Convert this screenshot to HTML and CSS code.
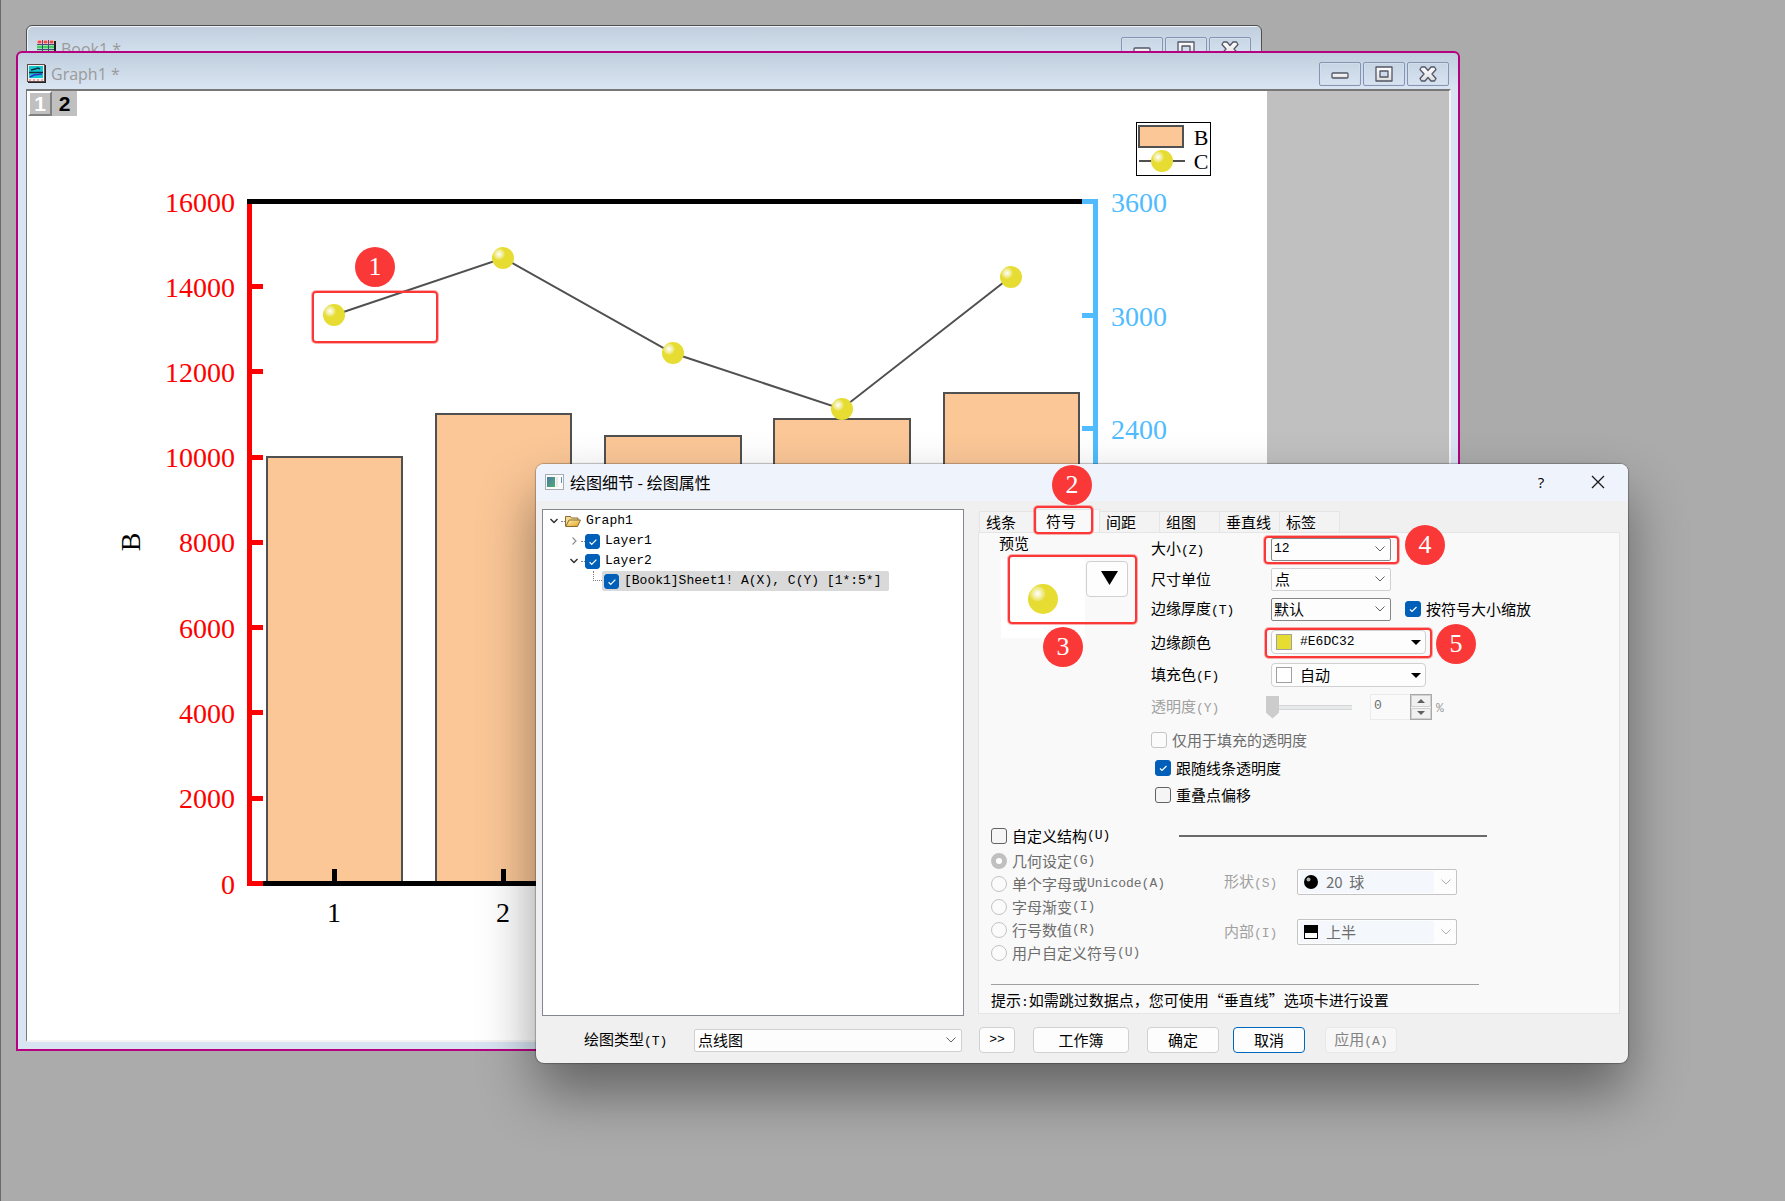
FILE: index.html
```
<!DOCTYPE html>
<html lang="zh-CN">
<head>
    <meta charset="UTF-8">
    <meta name="viewport" content="width=device-width, initial-scale=1.0">
    <title>绘图细节 - 绘图属性</title>
    <link rel="stylesheet" href="styles.css">
</head>
<body>
    <!-- Shared shapes -->
    <svg class="defs" width="0" height="0" aria-hidden="true">
        <defs>
            <radialGradient id="ball-fill" cx="0.32" cy="0.32" r="0.27">
                <stop offset="0" stop-color="#ffffff"/>
                <stop offset="0.4" stop-color="#f6f3bd"/>
                <stop offset="0.9" stop-color="#ebe35c"/>
                <stop offset="1" stop-color="#e6dc32"/>
            </radialGradient>
            <linearGradient id="glyph-fill" x1="0" y1="0" x2="0" y2="1">
                <stop offset="0" stop-color="#ffffff"/>
                <stop offset="1" stop-color="#dcdcdc"/>
            </linearGradient>
            <linearGradient id="folder-fill" x1="0" y1="0" x2="1" y2="1">
                <stop offset="0" stop-color="#fff0a8"/>
                <stop offset="1" stop-color="#e0a020"/>
            </linearGradient>
            <linearGradient id="app-fill" x1="0" y1="0" x2="1" y2="1">
                <stop offset="0" stop-color="#4a78a8"/>
                <stop offset="1" stop-color="#4fae6e"/>
            </linearGradient>
            <symbol id="ball" viewBox="0 0 22 22">
                <circle cx="11" cy="11" r="11" fill="url(#ball-fill)"/>
            </symbol>
            <symbol id="win-min" viewBox="0 0 20 18">
                <rect x="2" y="8" width="16" height="5" rx="1" fill="url(#glyph-fill)" stroke="#535666" stroke-width="1.300"/>
            </symbol>
            <symbol id="win-max" viewBox="0 0 20 18">
                <path d="M2 2h16v14h-16z M6 6v6h8v-6z" fill="url(#glyph-fill)" fill-rule="evenodd" stroke="#535666" stroke-width="1.300" stroke-linejoin="round"/>
            </symbol>
            <symbol id="win-close" viewBox="0 0 20 18">
                <path d="M3.500 2h3.500L10 5.500 13 2h3.500l1.500 2.500L14 9l4 4.500-1.500 2.500h-3.500L10 12.500 7 16h-3.500l-1.500-2.500L6 9 2 4.500z" fill="url(#glyph-fill)" stroke="#535666" stroke-width="1.300" stroke-linejoin="round"/>
            </symbol>
            <symbol id="chev-down" viewBox="0 0 10 10">
                <path d="M1.500 3L5 6.500 8.500 3" fill="none" stroke="#303030" stroke-width="1.500"/>
            </symbol>
            <symbol id="chev-right" viewBox="0 0 10 10">
                <path d="M3.500 1.500L7 5 3.500 8.500" fill="none" stroke="#909090" stroke-width="1.200"/>
            </symbol>
        </defs>
    </svg>

    <main class="desktop">
        <!-- Book window, behind -->
        <section class="window book-window">
            <header class="window-bar">
                <svg class="window-icon" viewBox="0 0 19 19" aria-hidden="true">
                    <rect x="1" y="1" width="18" height="18" fill="#222"/>
                    <rect width="17" height="17" fill="#f4f4f4"/>
                    <path d="M0.500 2h4M6.500 2h4M12.500 2h4" stroke="#f04848" stroke-width="3"/>
                    <path d="M0 7h17M0 12h17" stroke="#3fd060" stroke-width="3"/>
                    <path d="M0 4.500h17M0 9.500h17M0 14.500h17M5.500 0v17M11.500 0v17" stroke="#4a4a80"/>
                </svg>
                <span class="window-title">Book1 *</span>
                <button class="win-btn" aria-label="最小化"><svg><use href="#win-min"/></svg></button>
                <button class="win-btn" aria-label="最大化"><svg><use href="#win-max"/></svg></button>
                <button class="win-btn" aria-label="关闭"><svg><use href="#win-close"/></svg></button>
            </header>
        </section>

        <!-- Graph window -->
        <section class="window graph-window">
            <header class="window-bar">
                <svg class="window-icon" viewBox="0 0 19 19" aria-hidden="true">
                    <rect x="1" y="1" width="18" height="18" fill="#222"/>
                    <rect x="0.5" y="0.5" width="17" height="17" fill="#f0f0f0" stroke="#604848"/>
                    <rect x="2" y="2" width="14" height="12" fill="#10c8d0"/>
                    <path d="M4 6l4-1 3-1 2 1M2 8.500h14" fill="none" stroke="#103040" stroke-width="1.500"/>
                    <path d="M3 13l4-2 8-1" fill="none" stroke="#3030d0" stroke-width="1.500"/>
                    <path d="M2 16h14" stroke="#e06060" stroke-dasharray="2 2"/>
                </svg>
                <span class="window-title">Graph1 *</span>
                <button class="win-btn" aria-label="最小化"><svg><use href="#win-min"/></svg></button>
                <button class="win-btn" aria-label="最大化"><svg><use href="#win-max"/></svg></button>
                <button class="win-btn" aria-label="关闭"><svg><use href="#win-close"/></svg></button>
            </header>
            <div class="client">
                <div class="layer-tabs">
                    <button class="layer-tab">1</button>
                    <button class="layer-tab current">2</button>
                </div>
                <svg class="chart" viewBox="27 91 1240 949" role="img" aria-label="B 和 C 双轴图">
                    <!-- Columns -->
                    <g fill="#fbc797" stroke="#505050" stroke-width="2">
                        <rect x="267" y="457" width="135" height="426"/>
                        <rect x="436" y="414" width="135" height="469"/>
                        <rect x="605" y="436" width="136" height="447"/>
                        <rect x="774" y="419" width="136" height="464"/>
                        <rect x="944" y="393" width="135" height="490"/>
                    </g>
                    <!-- Axes -->
                    <g fill="none" stroke-width="5">
                        <path d="M249.500 199V886" stroke="#ff0000"/>
                        <path d="M252 286.500h11M252 371.500h11M252 457.500h11M252 542.500h11M252 627.500h11M252 712.500h11M252 798.500h11M252 883.500h11" stroke="#ff0000"/>
                        <path d="M247 201.500H1082" stroke="#000"/>
                        <path d="M263 883.500H1093" stroke="#000"/>
                        <path d="M334.500 869v12M503.500 869v12M672.500 869v12M841.500 869v12M1010.500 869v12" stroke="#000"/>
                        <path d="M1095.500 199V886M1082 201.500h11M1082 315.500h11M1082 428.500h11" stroke="#50bcff"/>
                    </g>
                    <!-- Line + symbol -->
                    <polyline points="334.500,315 503.500,258 672.500,353 841.500,409 1010.500,277" fill="none" stroke="#505050" stroke-width="2"/>
                    <use href="#ball" x="323" y="304" width="22" height="22"/>
                    <use href="#ball" x="492" y="247" width="22" height="22"/>
                    <use href="#ball" x="662" y="342" width="22" height="22"/>
                    <use href="#ball" x="831" y="398" width="22" height="22"/>
                    <use href="#ball" x="1000" y="266" width="22" height="22"/>
                    <g class="tick-label left">
                        <text x="235" y="212">16000</text>
                        <text x="235" y="297">14000</text>
                        <text x="235" y="382">12000</text>
                        <text x="235" y="467">10000</text>
                        <text x="235" y="552">8000</text>
                        <text x="235" y="638">6000</text>
                        <text x="235" y="723">4000</text>
                        <text x="235" y="808">2000</text>
                        <text x="235" y="894">0</text>
                    </g>
                    <g class="tick-label right">
                        <text x="1111" y="212">3600</text>
                        <text x="1111" y="326">3000</text>
                        <text x="1111" y="439">2400</text>
                    </g>
                    <g class="tick-label bottom">
                        <text x="334" y="922">1</text>
                        <text x="503" y="922">2</text>
                        <text transform="translate(140 542) rotate(-90)">B</text>
                    </g>
                    <!-- Legend -->
                    <rect x="1136.500" y="122.500" width="74" height="53" fill="#fff" stroke="#000"/>
                    <rect x="1139" y="126" width="44" height="21" fill="#fbc797" stroke="#505050" stroke-width="2"/>
                    <path d="M1139 161h46" stroke="#505050" stroke-width="2"/>
                    <use href="#ball" x="1151" y="150" width="22" height="22"/>
                    <g class="legend-label">
                        <text x="1201" y="145">B</text>
                        <text x="1201" y="169">C</text>
                    </g>
                </svg>
            </div>
        </section>

        <!-- Plot details dialog -->
        <section class="dialog" role="dialog" aria-labelledby="dialog-title">
            <header class="dialog-bar">
                <svg class="dialog-icon" viewBox="0 0 19 16" aria-hidden="true">
                    <rect x="0.5" y="0.5" width="18" height="15" fill="#fbfbfb" stroke="#a8acb0"/>
                    <rect x="2" y="3" width="8" height="10" fill="url(#app-fill)"/>
                    <path d="M12 3v10" stroke="#d8d8d8"/>
                    <path d="M16.500 3v6" stroke="#5f8fb0"/>
                </svg>
                <h1 id="dialog-title">绘图细节 - 绘图属性</h1>
                <button class="bar-btn" aria-label="帮助">?</button>
                <button class="bar-btn" aria-label="关闭">
                    <svg width="14" height="14" viewBox="0 0 14 14"><path d="M1 1l12 12M13 1L1 13" stroke="#1a1a1a" stroke-width="1.300"/></svg>
                </button>
            </header>

            <div class="dialog-body">
                <ul class="tree">
                    <li class="node">
                        <svg class="twisty"><use href="#chev-down"/></svg>
                        <span class="dots"></span>
                        <svg class="folder" viewBox="0 0 16 12" aria-hidden="true">
                            <path d="M0.500 11V1.500h5l1 1.500h6.500v3" fill="#f5dc90" stroke="#8a6a30"/>
                            <path d="M0.800 11.500L4 5h11.500l-3 6.500z" fill="url(#folder-fill)" stroke="#8a6a30"/>
                        </svg>
                        <span class="node-text">Graph1</span>
                    </li>
                    <li class="node level-1">
                        <svg class="twisty"><use href="#chev-right"/></svg>
                        <span class="dots"></span>
                        <input class="check small" type="checkbox" id="layer1" checked>
                        <label class="node-text" for="layer1">Layer1</label>
                    </li>
                    <li class="node level-1">
                        <svg class="twisty"><use href="#chev-down"/></svg>
                        <span class="dots"></span>
                        <input class="check small" type="checkbox" id="layer2" checked>
                        <label class="node-text" for="layer2">Layer2</label>
                    </li>
                    <li class="node level-2">
                        <span class="elbow"></span>
                        <span class="selected">
                            <input class="check small" type="checkbox" id="plot1" checked>
                            <label class="node-text" for="plot1">[Book1]Sheet1! A(X), C(Y) [1*:5*]</label>
                        </span>
                    </li>
                </ul>

                <div class="tabs">
                    <div class="tab-list" role="tablist">
                        <button class="tab" role="tab">线条</button>
                        <button class="tab active" role="tab" aria-selected="true">符号</button>
                        <button class="tab" role="tab">间距</button>
                        <button class="tab" role="tab">组图</button>
                        <button class="tab" role="tab">垂直线</button>
                        <button class="tab" role="tab">标签</button>
                    </div>

                    <div class="tab-panel" role="tabpanel">
                        <div class="symbol-grid">
                            <div class="preview">
                                <p>预览</p>
                                <div class="preview-row">
                                    <div class="preview-box"><svg width="30" height="30"><use href="#ball"/></svg></div>
                                    <button class="preview-btn" aria-label="选择符号">
                                        <svg width="17" height="14" viewBox="0 0 17 14"><path d="M0 0h17L8.500 14z"/></svg>
                                    </button>
                                </div>
                            </div>

                            <div class="fields">
                                <div class="field">
                                    <label for="size">大小<span class="key">(Z)</span></label>
                                    <select class="combo edit key" id="size"><option>12</option></select>
                                </div>
                                <div class="field">
                                    <label for="unit">尺寸单位</label>
                                    <select class="combo" id="unit"><option>点</option></select>
                                </div>
                                <div class="field">
                                    <label for="edge">边缘厚度<span class="key">(T)</span></label>
                                    <select class="combo edit" id="edge"><option>默认</option></select>
                                    <label class="scale-option"><input class="check" type="checkbox" checked>按符号大小缩放</label>
                                </div>
                                <div class="field tall">
                                    <label for="edge-color">边缘颜色</label>
                                    <div class="color-combo">
                                        <span class="swatch yellow"></span>
                                        <select class="key" id="edge-color"><option>#E6DC32</option></select>
                                    </div>
                                </div>
                                <div class="field">
                                    <label for="fill-color">填充色<span class="key">(F)</span></label>
                                    <div class="color-combo">
                                        <span class="swatch"></span>
                                        <select id="fill-color"><option>自动</option></select>
                                    </div>
                                </div>
                                <div class="field opacity-field">
                                    <label for="opacity">透明度<span class="key">(Y)</span></label>
                                    <input class="slider" type="range" id="opacity" value="0" disabled>
                                    <div class="spin">
                                        <input class="key" type="text" value="0" aria-label="透明度数值" disabled>
                                        <div class="spin-btns">
                                            <button disabled aria-label="增加"><svg width="8" height="4" viewBox="0 0 8 4"><path d="M0 4h8L4 0z"/></svg></button>
                                            <button disabled aria-label="减少"><svg width="8" height="4" viewBox="0 0 8 4"><path d="M0 0h8L4 4z"/></svg></button>
                                        </div>
                                    </div>
                                    <span class="key percent">%</span>
                                </div>
                                <label class="option fill-only off"><input class="check" type="checkbox" disabled>仅用于填充的透明度</label>
                                <label class="option follow"><input class="check" type="checkbox" checked>跟随线条透明度</label>
                                <label class="option offset"><input class="check" type="checkbox">重叠点偏移</label>
                            </div>
                        </div>

                        <div class="custom-head">
                            <label class="option"><input class="check" type="checkbox">自定义结构<span class="key">(U)</span></label>
                            <hr>
                        </div>
                        <div class="custom-grid">
                            <div class="radios">
                                <label class="option off"><input class="radio" type="radio" name="build" checked disabled>几何设定<span class="key">(G)</span></label>
                                <label class="option off"><input class="radio" type="radio" name="build" disabled>单个字母或<span class="key">Unicode(A)</span></label>
                                <label class="option off"><input class="radio" type="radio" name="build" disabled>字母渐变<span class="key">(I)</span></label>
                                <label class="option off"><input class="radio" type="radio" name="build" disabled>行号数值<span class="key">(R)</span></label>
                                <label class="option off"><input class="radio" type="radio" name="build" disabled>用户自定义符号<span class="key">(U)</span></label>
                            </div>
                            <div class="shape-fields">
                                <div class="shape-field">
                                    <label for="shape">形状<span class="key">(S)</span></label>
                                    <div class="icon-combo">
                                        <svg width="14" height="14" viewBox="0 0 14 14"><circle cx="7" cy="7" r="7"/><circle cx="4.500" cy="4.500" r="2" fill="#b0b0b0"/></svg>
                                        <select id="shape" disabled><option>20&nbsp; 球</option></select>
                                    </div>
                                </div>
                                <div class="shape-field">
                                    <label for="interior">内部<span class="key">(I)</span></label>
                                    <div class="icon-combo">
                                        <svg width="14" height="14" viewBox="0 0 14 14"><rect x="0.5" y="0.5" width="13" height="13" fill="#fff" stroke="#000"/><rect width="14" height="8"/></svg>
                                        <select id="interior" disabled><option>上半</option></select>
                                    </div>
                                </div>
                            </div>
                        </div>
                        <p class="hint">提示<span class="key">:</span>如需跳过数据点，您可使用“垂直线”选项卡进行设置</p>
                    </div>
                </div>
            </div>

            <footer class="dialog-foot">
                <label for="plot-type">绘图类型<span class="key">(T)</span></label>
                <select class="combo plot-type" id="plot-type"><option>点线图</option></select>
                <button class="btn more key">&gt;&gt;</button>
                <button class="btn book">工作簿</button>
                <button class="btn ok">确定</button>
                <button class="btn cancel">取消</button>
                <button class="btn apply" disabled>应用<span class="key">(A)</span></button>
            </footer>
        </section>

        <!-- Numbered callouts -->
        <div class="mark-box box-1"></div>
        <div class="mark-box box-2"></div>
        <div class="mark-box box-3"></div>
        <div class="mark-box box-4"></div>
        <div class="mark-box box-5"></div>
        <span class="mark mark-1">1</span>
        <span class="mark mark-2">2</span>
        <span class="mark mark-3">3</span>
        <span class="mark mark-4">4</span>
        <span class="mark mark-5">5</span>
    </main>
</body>
</html>
```
FILE: styles.css
```
* {
    box-sizing: border-box;
}

body {
    margin: 0;
    background: #ababab;
    color: #000;
    font-family: "Noto Sans CJK SC", sans-serif;
    font-size: 15px;
    line-height: 20px;
}

button, input, select {
    font: inherit;
    color: inherit;
    margin: 0;
}

p, h1, ul {
    margin: 0;
    padding: 0;
}

.defs {
    position: absolute;
}

/* Half-width latin text in the dialog */
.key {
    font-family: "Liberation Mono", monospace;
    font-size: 13px;
}

.desktop {
    position: relative;
    min-height: 100vh;
    overflow: hidden;
    border-left: 1px solid #6a6a6a;
}

/* Child windows */
.window {
    position: absolute;
    background: linear-gradient(#c0cedd, #d8e4f2 34px);
    border-radius: 6px 6px 0 0;
}

.book-window {
    left: 25px;
    top: 25px;
    width: 1236px;
    height: 600px;
    border: 1px solid #505050;
    box-shadow: inset 1px 1px #f0f4f8;
    padding: 0 10px;
}

.graph-window {
    left: 15px;
    top: 51px;
    width: 1444px;
    height: 1000px;
    display: flex;
    flex-direction: column;
    border: 2px solid #b5007f;
    padding: 0 7px 7px 8px;
}

.window-bar {
    display: flex;
    align-items: center;
    gap: 2px;
    height: 36px;
    padding-top: 6px;
    flex: none;
}

.graph-window .window-bar {
    padding: 6px 2px 0 1px;
}

.book-window .window-bar {
    height: 46px;
    padding-top: 0;
}

.window-icon {
    width: 19px;
    height: 19px;
}

.graph-window .window-icon {
    margin-bottom: 2px;
}

.window-title {
    flex: 1;
    padding-left: 3px;
    font-family: "Open Sans", "Noto Sans", sans-serif;
    font-size: 16px;
    color: #9a9a9a;
}

.win-btn {
    width: 42px;
    height: 24px;
    padding: 0;
    border: 1px solid #8494b2;
    border-radius: 2px;
    background: transparent;
    box-shadow: inset 0 0 0 1px #d4deeb;
    display: flex;
    align-items: center;
    justify-content: center;
}

.win-btn svg {
    width: 20px;
    height: 18px;
    flex: none;
}

.client {
    position: relative;
    flex: 1;
    min-height: 0;
    display: flex;
    background: #c0c0c0;
    border: 2px solid;
    border-color: #787878 #f4f4f4 #f4f4f4 #787878;
    border-left-width: 1px;
}

.chart {
    width: 1240px;
    flex: none;
    background: #fff;
}

.layer-tabs {
    position: absolute;
    left: 1px;
    top: 0;
    display: flex;
}

.layer-tab {
    width: 25px;
    height: 25px;
    padding: 0;
    border: 0;
    background: #c0c0c0;
    font-family: "Liberation Sans", sans-serif;
    font-size: 21px;
    font-weight: bold;
}

.layer-tab:first-child {
    width: 24px;
    border: 2px solid;
    border-color: #fff #808080 #808080 #fff;
    color: #fff;
}

/* Chart text */
.tick-label, .legend-label {
    font-family: "Liberation Serif", serif;
    font-size: 28px;
}

.tick-label.left {
    fill: #ff0000;
    text-anchor: end;
}

.tick-label.right {
    fill: #50bcff;
}

.tick-label.bottom, .legend-label {
    text-anchor: middle;
}

.legend-label {
    font-size: 22px;
}

/* Dialog */
.dialog {
    position: absolute;
    left: 535px;
    top: 464px;
    width: 1092px;
    background: #f0f0f0;
    border-radius: 8px;
    overflow: hidden;
    box-shadow: 0 0 1px 1px rgba(0, 0, 0, 0.25), 0 30px 56px rgba(0, 0, 0, 0.42);
}

.dialog-bar {
    display: flex;
    align-items: center;
    height: 37px;
    padding: 0 14px 2px 9px;
    background: #eff3fb;
}

.dialog-icon {
    width: 19px;
    height: 16px;
    margin-right: 6px;
}

.dialog-bar h1 {
    flex: 1;
    font-size: 16px;
    font-weight: normal;
}

.bar-btn {
    width: 32px;
    height: 28px;
    padding: 0;
    border: 0;
    background: none;
    display: flex;
    align-items: center;
    justify-content: center;
    font-family: "Open Sans", sans-serif;
}

.bar-btn + .bar-btn {
    margin-left: 25px;
}

.dialog-body {
    display: flex;
    gap: 14px;
    padding: 8px 8px 0 6px;
}

/* Layer tree */
.tree {
    width: 422px;
    flex: none;
    padding: 1px 4px;
    list-style: none;
    background: #fff;
    border: 1px solid #828790;
}

.node {
    display: flex;
    align-items: center;
    height: 20px;
}

.level-1 {
    padding-left: 20px;
}

.level-2 {
    padding-left: 46px;
}

.node-text {
    padding-left: 5px;
    font-family: "Liberation Mono", monospace;
    font-size: 13px;
    white-space: nowrap;
}

.twisty {
    width: 10px;
    height: 10px;
    margin: 0 2px;
}

.folder {
    width: 16px;
    height: 12px;
}

.dots {
    width: 4px;
    border-top: 1px dotted #808080;
}

.elbow {
    width: 9px;
    height: 10px;
    align-self: flex-start;
    border-left: 1px dotted #808080;
    border-bottom: 1px dotted #808080;
}

.selected {
    display: flex;
    align-items: center;
    height: 20px;
    padding: 0 8px 0 2px;
    background: #d9d9d9;
    border-radius: 2px;
}

/* Check boxes and radios */
.check, .radio {
    appearance: none;
    flex: none;
    width: 16px;
    height: 16px;
    margin: 0 5px 0 0;
    border: 1px solid #626262;
    border-radius: 3px;
    background: #f5f5f5;
}

.check.small {
    width: 15px;
    height: 15px;
    margin: 0;
}

.check:checked {
    border-color: #005fb8;
    background: #005fb8 url("data:image/svg+xml,%3Csvg xmlns='http://www.w3.org/2000/svg' viewBox='0 0 14 14'%3E%3Cpath d='M4 7.500l2 2 4.500-4.500' fill='none' stroke='white' stroke-width='1.200'/%3E%3C/svg%3E") center / 14px no-repeat;
}

.radio {
    border-radius: 50%;
}

.check:disabled, .radio:disabled {
    border-color: #c4c4c4;
    background: #fbfbfb;
}

.radio:checked:disabled {
    border: 5px solid #c0c0c0;
    background: #fff;
}

/* Tabs */
.tabs {
    flex: 1;
    display: flex;
    flex-direction: column;
    min-width: 0;
}

.tab-list {
    display: flex;
    align-items: flex-end;
    height: 23px;
    padding-left: 1px;
}

.tab {
    min-width: 60px;
    height: 21px;
    padding: 0 6px;
    border: 1px solid #e5e5e5;
    border-width: 1px 1px 0 0;
    background: #f3f3f3;
    text-align: left;
    line-height: 20px;
}

.tab:first-child {
    border-left-width: 1px;
    min-width: 58px;
}

.tab.active {
    min-width: 63px;
    height: 23px;
    padding-left: 9px;
    background: #f9f9f9;
}

.tab-panel {
    flex: 1;
    margin-bottom: 2px;
    padding: 1px 12px 0;
    border: 1px solid #e5e5e5;
    background: #f9f9f9;
}

.symbol-grid {
    display: grid;
    grid-template-columns: 160px 1fr;
}

.preview {
    padding-left: 8px;
    line-height: 18px;
}

.preview-row {
    display: flex;
    gap: 1px;
    margin: 7px 0 0 2px;
}

.preview-box {
    width: 84px;
    height: 79px;
    display: flex;
    align-items: center;
    justify-content: center;
    background: #fff;
}

.preview-btn {
    width: 42px;
    height: 36px;
    margin-top: 2px;
    padding: 0 0 0 4px;
    border: 1px solid #d0d0d0;
    border-radius: 4px;
    background: #fdfdfd;
}

.field {
    display: flex;
    align-items: center;
    height: 30px;
}

.field.tall {
    height: 36px;
}

.field > label:first-child {
    width: 120px;
}

/* Drop-downs */
select {
    appearance: none;
    min-width: 0;
    border: 0;
    padding: 0;
    background: transparent;
    opacity: 1;
}

.combo {
    width: 120px;
    height: 23px;
    padding: 0 20px 0 3px;
    border: 1px solid #d0d0d0;
    border-radius: 2px;
    background: #fdfdfd url("data:image/svg+xml,%3Csvg xmlns='http://www.w3.org/2000/svg' viewBox='0 0 10 6'%3E%3Cpath d='M.5.5L5 5 9.500.5' fill='none' stroke='%23606060'/%3E%3C/svg%3E") right 5px center / 10px 6px no-repeat;
}

.combo.edit {
    padding-left: 2px;
    border-color: #868686;
}

.scale-option {
    display: flex;
    align-items: center;
    margin-left: 14px;
}

.color-combo {
    display: flex;
    align-items: center;
    gap: 8px;
    width: 155px;
    height: 24px;
    padding: 0 4px;
    border: 1px solid #d0d0d0;
    border-radius: 4px;
    background: #fdfdfd;
}

.color-combo select {
    flex: 1;
    height: 22px;
    background: url("data:image/svg+xml,%3Csvg xmlns='http://www.w3.org/2000/svg' viewBox='0 0 10 5'%3E%3Cpath d='M0 0h10L5 5z'/%3E%3C/svg%3E") right center / 10px 5px no-repeat;
}

.swatch {
    width: 16px;
    height: 16px;
    border: 1px solid #a0a0a0;
    background: #fff;
}

.swatch.yellow {
    background: #e6dc32;
}

/* Opacity row */
.opacity-field {
    height: 34px;
    color: #a0a0a0;
}

.opacity-field > label:first-child {
    width: 115px;
}

.slider {
    appearance: none;
    width: 86px;
    height: 24px;
    margin-right: 18px;
    background: linear-gradient(#e7eaea 0 0) center / 100% 3px no-repeat, linear-gradient(#d6d6d6 0 0) center / 100% 5px no-repeat;
}

.slider::-webkit-slider-thumb {
    appearance: none;
    width: 13px;
    height: 23px;
    background: #cccccc;
    clip-path: polygon(0 0, 100% 0, 100% 75%, 50% 100%, 0 75%);
}

.spin {
    display: flex;
    width: 62px;
    height: 26px;
    border: 1px solid #ebebeb;
}

.spin input {
    flex: 1;
    min-width: 0;
    padding: 0 3px 2px;
    border: 0;
    background: #fafafa;
    color: #6d6d6d;
}

.spin-btns {
    width: 22px;
    margin: -1px;
    display: flex;
    flex-direction: column;
    gap: 1px;
    border: 1px solid #a8a8a8;
}

.spin-btns button {
    flex: 1;
    display: flex;
    align-items: center;
    justify-content: center;
    padding: 0;
    border: 1px solid #d0d0d0;
    background: #f0f0f0;
}

.spin-btns path {
    fill: #606060;
}

.percent {
    margin-left: 4px;
    padding-top: 4px;
}

.option {
    display: flex;
    align-items: center;
}

.option.off {
    color: #6d6d6d;
}

.fill-only {
    height: 32px;
}

.follow {
    height: 24px;
    padding-left: 4px;
}

.offset {
    height: 30px;
    padding-left: 4px;
}

/* Custom construction */
.custom-head {
    display: flex;
    align-items: center;
    height: 26px;
    margin-top: 13px;
}

.custom-head .option {
    width: 188px;
}

.custom-head hr {
    width: 308px;
    margin: 0;
    border: 0;
    border-top: 2px solid #6a6a6a;
}

.custom-grid {
    display: grid;
    grid-template-columns: 233px 1fr;
}

.radios .option {
    height: 23px;
}

.shape-fields {
    display: flex;
    flex-direction: column;
    gap: 24px;
    padding-top: 20px;
}

.shape-field {
    display: flex;
    align-items: center;
    color: #a0a0a0;
}

.shape-field label {
    width: 73px;
}

.icon-combo {
    display: flex;
    align-items: center;
    gap: 8px;
    width: 160px;
    height: 26px;
    padding: 0 5px 0 6px;
    border: 1px solid #c4c4c4;
    border-radius: 2px;
    background: linear-gradient(#f4f8fd, #f4f8fd) 2px center / 134px 22px no-repeat #fdfdfd;
}

.icon-combo select {
    flex: 1;
    height: 22px;
    color: #6d6d6d;
    background: url("data:image/svg+xml,%3Csvg xmlns='http://www.w3.org/2000/svg' viewBox='0 0 10 6'%3E%3Cpath d='M.5.5L5 5 9.500.5' fill='none' stroke='%23b0b0b0'/%3E%3C/svg%3E") right center / 10px 6px no-repeat;
}

.hint {
    width: 488px;
    margin-top: 20px;
    padding-top: 5px;
    border-top: 1px solid #a0a0a0;
    line-height: 20px;
    white-space: nowrap;
}

/* Bottom buttons */
.dialog-foot {
    display: flex;
    align-items: center;
    padding: 11px 8px 10px 48px;
}

.dialog-foot label {
    width: 110px;
}

.plot-type {
    width: 268px;
    margin-right: 17px;
}

.btn {
    height: 26px;
    padding: 0;
    border: 1px solid #d0d0d0;
    border-radius: 4px;
    background: #fdfdfd;
}

.btn.more {
    width: 36px;
    margin-right: 18px;
}

.btn.book {
    width: 96px;
    margin-right: 18px;
}

.btn.ok {
    width: 72px;
    margin-right: 14px;
}

.btn.cancel {
    width: 72px;
    margin-right: 20px;
    border-color: #0067c0;
}

.btn.apply {
    width: 72px;
    border-color: #e8e8e8;
    background: #f7f7f7;
    color: #838383;
}

/* Callouts drawn over the windows */
.mark {
    position: absolute;
    width: 40px;
    height: 40px;
    border-radius: 50%;
    background: #fb3838;
    color: #fff;
    font-family: "Liberation Serif", serif;
    font-size: 26px;
    line-height: 40px;
    text-align: center;
}

.mark-box {
    position: absolute;
    border: 2px solid #fb3838;
    border-radius: 4px;
    box-shadow: 0 0 0 1px rgba(251, 56, 56, 0.4);
}

.mark-1 { left: 354px; top: 247px; }
.mark-2 { left: 1051px; top: 465px; }
.mark-3 { left: 1042px; top: 627px; }
.mark-4 { left: 1404px; top: 525px; }
.mark-5 { left: 1435px; top: 624px; }

.box-1 { left: 311px; top: 291px; width: 126px; height: 52px; }
.box-2 { left: 1033px; top: 506px; width: 59px; height: 28px; }
.box-3 { left: 1007px; top: 555px; width: 129px; height: 69px; }
.box-4 { left: 1263px; top: 536px; width: 135px; height: 28px; }
.box-5 { left: 1264px; top: 628px; width: 167px; height: 30px; }
```
